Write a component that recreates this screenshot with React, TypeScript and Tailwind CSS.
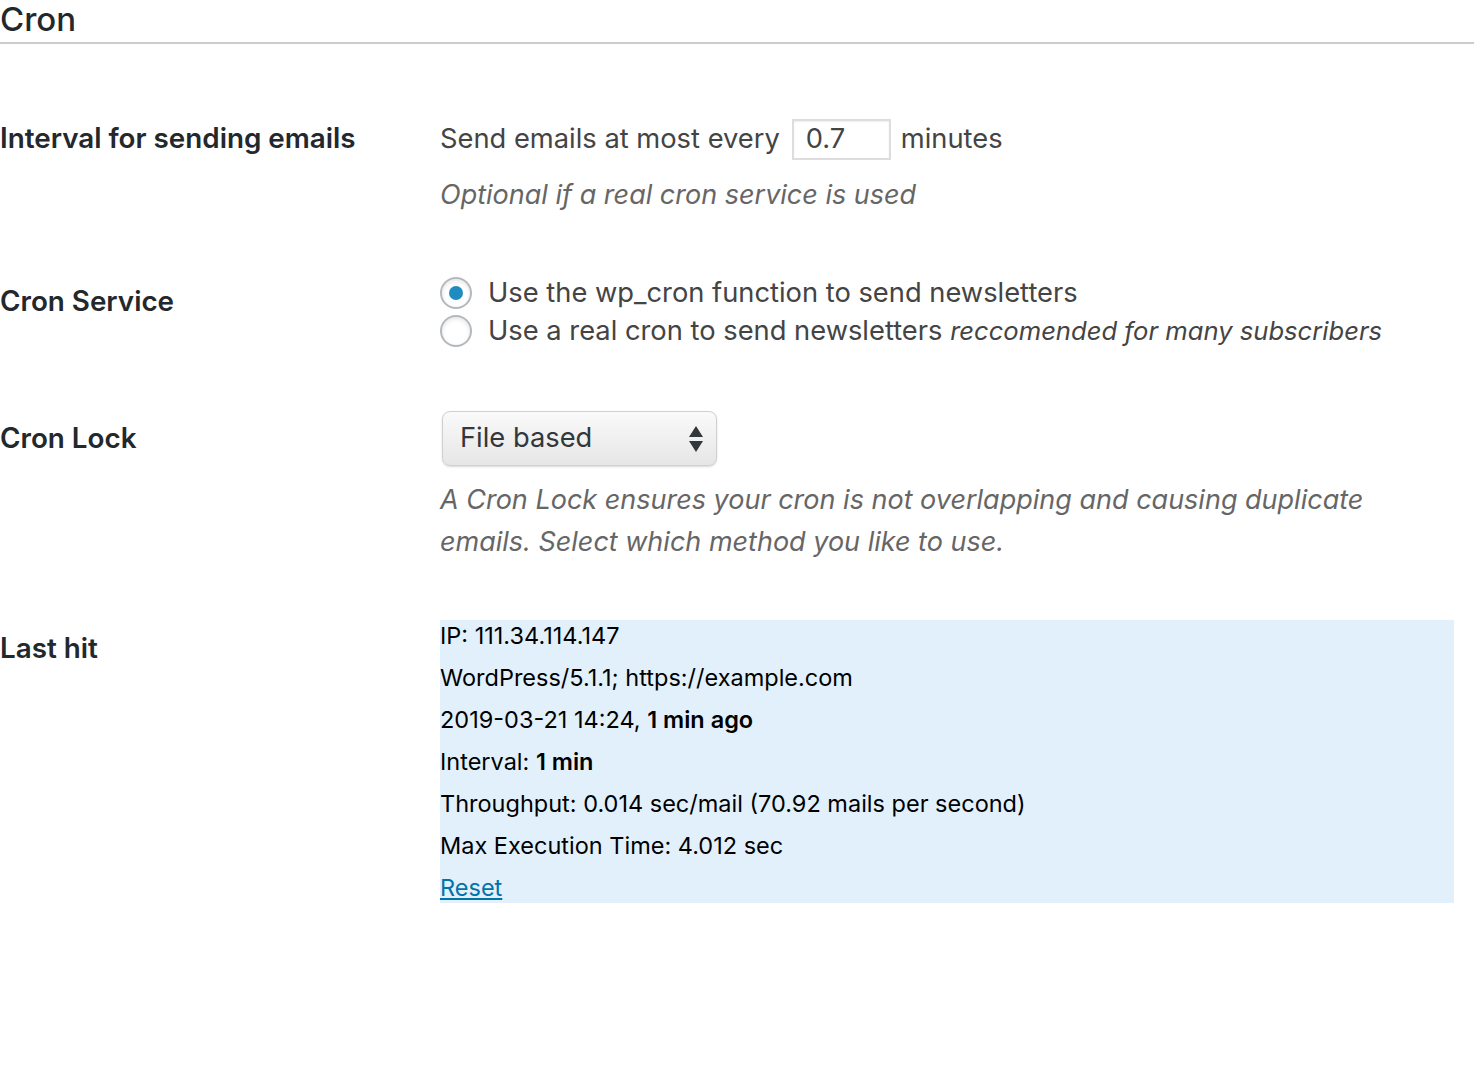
import React from "react";

const font = { fontFamily: "Inter, 'Liberation Sans', sans-serif" };

function Radio({ checked }: { checked?: boolean }) {
  return (
    <span className="flex h-[32px] w-[32px] shrink-0 items-center justify-center rounded-full border-2 border-[#b4b9be] bg-white shadow-[inset_0_2px_4px_rgba(0,0,0,0.1)]">
      {checked && <span className="h-[14px] w-[14px] rounded-full bg-[#1e8cbe]" />}
    </span>
  );
}

function SelectArrows() {
  return (
    <svg width="16" height="28" viewBox="0 0 16 28" className="shrink-0">
      <path d="M8 1 L15 12 H1 Z" fill="#32373c" />
      <path d="M8 27 L15 16 H1 Z" fill="#32373c" />
    </svg>
  );
}

export default function App() {
  return (
    <div className="min-h-screen bg-white text-[#23282d]" style={font}>
      {/* Section title */}
      <h2 className="h-[44px] border-b-2 border-[#cccccc] text-[33px] font-medium leading-[38px]">
        Cron
      </h2>

      <div className="mt-[36px] w-[1454px]">
        {/* Interval row */}
        <div className="grid h-[163px] grid-cols-[440px_1014px]">
          <div className="pt-[40px] text-[27.8px] font-semibold leading-[36px]">
            Interval for sending emails
          </div>
          <div className="pt-[39px] text-[27.3px] text-[#444]">
            <div className="flex h-[41px] items-center">
              <span>Send emails at most every</span>
              <span className="ml-[12px] flex h-[41px] w-[99px] items-center border-2 border-[#dddddd] pl-[12px] shadow-[inset_0_1px_2px_rgba(0,0,0,0.07)]">
                0.7
              </span>
              <span className="ml-[10px]">minutes</span>
            </div>
            <p className="mt-[14px] text-[27px] italic leading-[42px] text-[#666]">
              Optional if a real cron service is used
            </p>
          </div>
        </div>

        {/* Cron service row */}
        <div className="grid h-[137px] grid-cols-[440px_1014px]">
          <div className="pt-[40px] text-[27.8px] font-semibold leading-[36px]">
            Cron Service
          </div>
          <div className="pt-[31px] text-[27.3px] text-[#444]">
            <label className="flex h-[38px] items-center gap-[16px]">
              <Radio checked />
              <span>Use the wp_cron function to send newsletters</span>
            </label>
            <label className="flex h-[38px] items-center gap-[16px]">
              <Radio />
              <span>
                Use a real cron to send newsletters{" "}
                <em className="text-[25.6px]">reccomended for many subscribers</em>
              </span>
            </label>
          </div>
        </div>

        {/* Cron lock row */}
        <div className="grid h-[210px] grid-cols-[440px_1014px]">
          <div className="pt-[40px] text-[27.8px] font-semibold leading-[36px]">
            Cron Lock
          </div>
          <div className="pt-[31px] text-[27.3px]">
            <div className="ml-[2px] flex h-[55px] w-[275px] items-center justify-between rounded-[8px] border border-[#d0d0d0] bg-gradient-to-b from-[#fafafa] to-[#e6e6e6] pl-[17px] pr-[12px] text-[#32373c] shadow-[0_1px_2px_rgba(0,0,0,0.15)]">
              <span>File based</span>
              <SelectArrows />
            </div>
            <p className="mt-[13px] text-[27px] italic leading-[42px] text-[#666]">
              A Cron Lock ensures your cron is not overlapping and causing duplicate emails. Select which
              method you like to use.
            </p>
          </div>
        </div>

        {/* Last hit row */}
        <div className="grid grid-cols-[440px_1014px]">
          <div className="pt-[40px] text-[27.8px] font-semibold leading-[36px]">Last hit</div>
          <div className="pt-[30px]">
            <div className="flex flex-col gap-[12px] bg-[#e2f0fc] pt-[1px] text-[23.5px] leading-[30px] text-black">
              <div>IP: 111.34.114.147</div>
              <div>WordPress/5.1.1; https://example.com</div>
              <div>
                2019-03-21 14:24, <strong className="font-semibold">1 min ago</strong>
              </div>
              <div>
                Interval: <strong className="font-semibold">1 min</strong>
              </div>
              <div>Throughput: 0.014 sec/mail (70.92 mails per second)</div>
              <div>Max Execution Time: 4.012 sec</div>
              <div>
                <a href="#" className="text-[#0073aa] underline">
                  Reset
                </a>
              </div>
            </div>
          </div>
        </div>
      </div>
    </div>
  );
}
